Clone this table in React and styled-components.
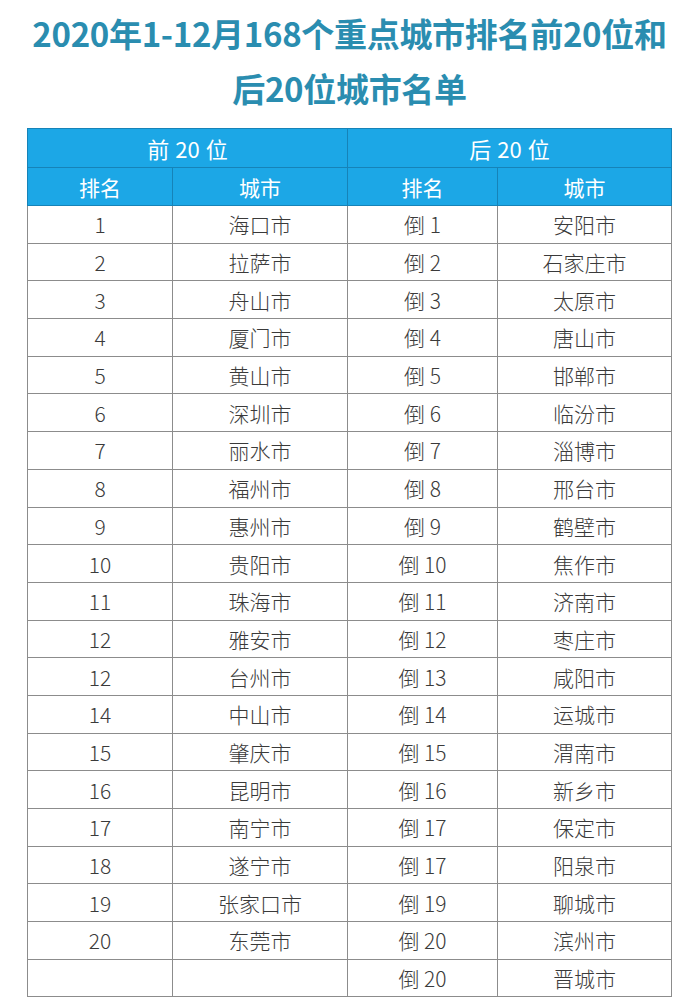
import React from "react";
import styled, { createGlobalStyle } from "styled-components";

const Global = createGlobalStyle`
  html, body { margin: 0; padding: 0; background: #ffffff; }
  body { font-family: "Noto Sans CJK SC", "Noto Sans", sans-serif; }
`;

const Page = styled.div`
  width: 699px;
  padding-top: 6px;
`;

const Title = styled.h1`
  margin: 0 0 12px;
  text-align: center;
  font-family: "Noto Sans CJK SC", "Noto Sans", sans-serif;
  font-weight: 700;
  font-size: 33px;
  line-height: 55px;
  color: #2a8db0;
  letter-spacing: -0.3px;
`;

const Table = styled.table`
  margin-left: 27px;
  width: 644px;
  border-collapse: collapse;
  table-layout: fixed;
  font-family: "Noto Sans CJK SC", "Noto Sans", sans-serif;
`;

const HeadCell = styled.th`
  background: #1ca7e6;
  color: #ffffff;
  font-weight: 400;
  font-size: ${(p) => (p.$top ? "22px" : "21px")};
  height: ${(p) => (p.$top ? "38px" : "37px")};
  padding: 0;
  text-align: center;
  border: 1px solid #1683b8;
  word-spacing: 1px;
`;

const Row = styled.tr`
  height: 37.7px;
`;

const Cell = styled.td`
  padding: 0;
  text-align: center;
  font-size: 21px;
  font-weight: 300;
  color: #3a3a3a;
  border: 1px solid #8c8c8c;
`;

const top = [
  ["1", "海口市"], ["2", "拉萨市"], ["3", "舟山市"], ["4", "厦门市"], ["5", "黄山市"],
  ["6", "深圳市"], ["7", "丽水市"], ["8", "福州市"], ["9", "惠州市"], ["10", "贵阳市"],
  ["11", "珠海市"], ["12", "雅安市"], ["12", "台州市"], ["14", "中山市"], ["15", "肇庆市"],
  ["16", "昆明市"], ["17", "南宁市"], ["18", "遂宁市"], ["19", "张家口市"], ["20", "东莞市"],
  ["", ""],
];

const bottom = [
  ["倒 1", "安阳市"], ["倒 2", "石家庄市"], ["倒 3", "太原市"], ["倒 4", "唐山市"], ["倒 5", "邯郸市"],
  ["倒 6", "临汾市"], ["倒 7", "淄博市"], ["倒 8", "邢台市"], ["倒 9", "鹤壁市"], ["倒 10", "焦作市"],
  ["倒 11", "济南市"], ["倒 12", "枣庄市"], ["倒 13", "咸阳市"], ["倒 14", "运城市"], ["倒 15", "渭南市"],
  ["倒 16", "新乡市"], ["倒 17", "保定市"], ["倒 17", "阳泉市"], ["倒 19", "聊城市"], ["倒 20", "滨州市"],
  ["倒 20", "晋城市"],
];

export default function App() {
  return (
    <Page>
      <Global />
      <Title>
        2020年1-12月168个重点城市排名前20位和
        <br />
        后20位城市名单
      </Title>
      <Table>
        <colgroup>
          <col style={{ width: 145 }} />
          <col style={{ width: 175 }} />
          <col style={{ width: 150 }} />
          <col style={{ width: 174 }} />
        </colgroup>
        <thead>
          <tr>
            <HeadCell $top colSpan={2}>前 20 位</HeadCell>
            <HeadCell $top colSpan={2}>后 20 位</HeadCell>
          </tr>
          <tr>
            <HeadCell>排名</HeadCell>
            <HeadCell>城市</HeadCell>
            <HeadCell>排名</HeadCell>
            <HeadCell>城市</HeadCell>
          </tr>
        </thead>
        <tbody>
          {top.map((t, i) => (
            <Row key={i}>
              <Cell>{t[0]}</Cell>
              <Cell>{t[1]}</Cell>
              <Cell>{bottom[i][0]}</Cell>
              <Cell>{bottom[i][1]}</Cell>
            </Row>
          ))}
        </tbody>
      </Table>
    </Page>
  );
}
